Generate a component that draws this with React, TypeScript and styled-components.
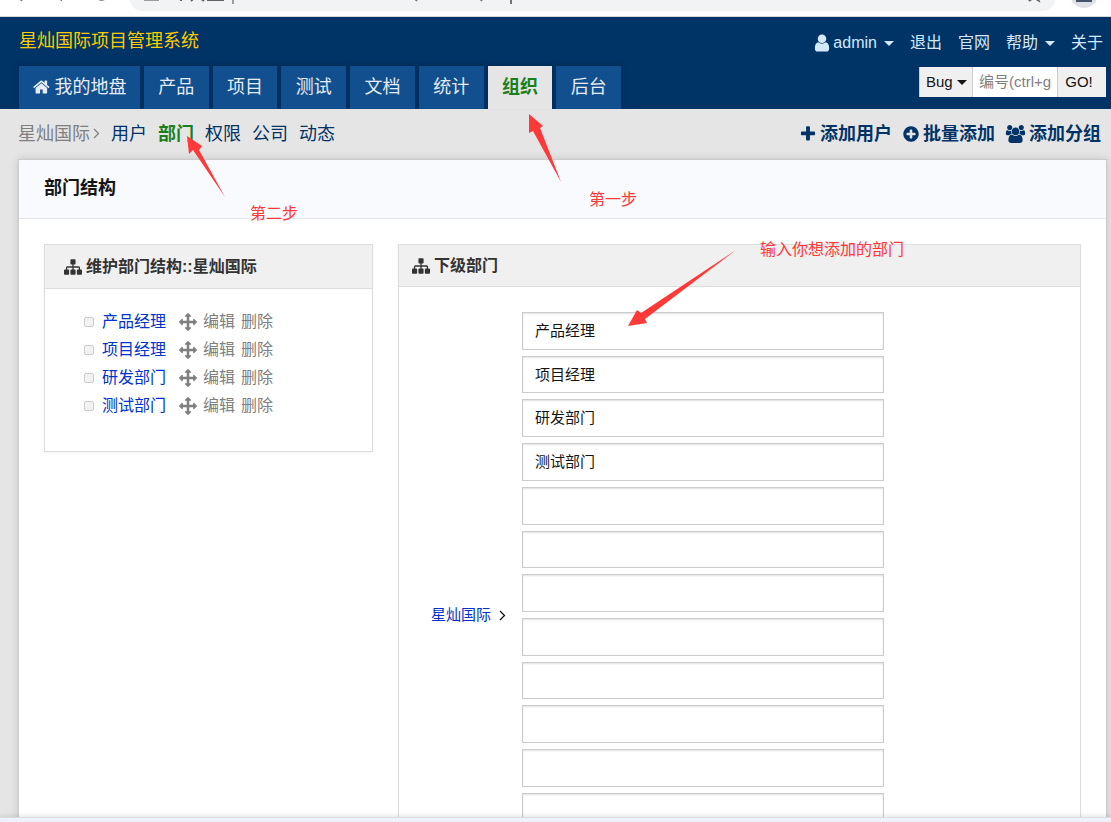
import React from "react";
import styled, { createGlobalStyle, css } from "styled-components";

const GlobalStyle = createGlobalStyle`
  *, *::before, *::after { box-sizing: border-box; }
  body {
    margin: 0;
    color: #141414;
    background: #e5e5e5;
    font-family: "Liberation Sans", "Noto Sans CJK SC", sans-serif;
    font-size: 16px;
    line-height: 24px;
  }
  a { text-decoration: none; color: inherit; }
  ul { list-style: none; margin: 0; padding: 0; }
  button, input, select { font: inherit; border-radius: 0; }
`;

/* ---------- icons ---------- */

const ICONS = {
  home: {
    x: 0,
    w: 1792,
    d: "M1408 992v480q0 26-19 45t-45 19h-384v-384h-256v384h-384q-26 0-45-19t-19-45v-480q0-1 .5-3t.5-3l575-474 575 474q1 2 1 6zm223-69l-62 74q-8 9-21 11h-3q-13 0-21-7l-692-577-692 577q-12 8-24 7-13-2-21-11l-62-74q-8-10-7-23.500t11-21.500l719-599q32-26 76-26t76 26l244 204v-195q0-14 9-23t23-9h192q14 0 23 9t9 23v408l219 182q10 8 11 21.500t-7 23.500z",
  },
  sitemap: {
    x: 0,
    w: 1792,
    d: "M1792 1248v320q0 40-28 68t-68 28h-320q-40 0-68-28t-28-68v-320q0-40 28-68t68-28h96v-192h-512v192h96q40 0 68 28t28 68v320q0 40-28 68t-68 28h-320q-40 0-68-28t-28-68v-320q0-40 28-68t68-28h96v-192h-512v192h96q40 0 68 28t28 68v320q0 40-28 68t-68 28h-320q-40 0-68-28t-28-68v-320q0-40 28-68t68-28h96v-192q0-52 38-90t90-38h512v-192h-96q-40 0-68-28t-28-68v-320q0-40 28-68t68-28h320q40 0 68 28t28 68v320q0 40-28 68t-68 28h-96v192h512q52 0 90 38t38 90v192h96q40 0 68 28t28 68z",
  },
  move: {
    x: 0,
    w: 1792,
    d: "M1792 896q0 26-19 45l-256 256q-19 19-45 19t-45-19-19-45v-128h-384v384h128q26 0 45 19t19 45-19 45l-256 256q-19 19-45 19t-45-19l-256-256q-19-19-19-45t19-45 45-19h128v-384h-384v128q0 26-19 45t-45 19-45-19l-256-256q-19-19-19-45t19-45l256-256q19-19 45-19t45 19 19 45v128h384v-384h-128q-26 0-45-19t-19-45 19-45l256-256q19-19 45-19t45 19l256 256q19 19 19 45t-19 45-45 19h-128v384h384v-128q0-26 19-45t45-19 45 19l256 256q19 19 19 45z",
  },
  plus: {
    x: 0,
    w: 1792,
    d: "M1600 736v192q0 40-28 68t-68 28h-416v416q0 40-28 68t-68 28h-192q-40 0-68-28t-28-68v-416h-416q-40 0-68-28t-28-68v-192q0-40 28-68t68-28h416v-416q0-40 28-68t68-28h192q40 0 68 28t28 68v416h416q40 0 68 28t28 68z",
  },
  plusCircle: {
    x: 0,
    w: 1792,
    d: "M1344 960v-128q0-26-19-45t-45-19h-256v-256q0-26-19-45t-45-19h-128q-26 0-45 19t-19 45v256h-256q-26 0-45 19t-19 45v128q0 26 19 45t45 19h256v256q0 26 19 45t45 19h128q26 0 45-19t19-45v-256h256q26 0 45-19t19-45zm320-64q0 209-103 385.500t-279.500 279.500-385.500 103-385.500-103-279.500-279.500-103-385.500 103-385.500 279.500-279.500 385.500-103 385.500 103 279.500 279.500 103 385.500z",
  },
  user: {
    x: 192,
    w: 1408,
    d: "M1536 1399q0 109-62.500 187t-150.500 78h-854q-88 0-150.500-78t-62.500-187q0-85 8.500-160.500t31.500-152 58.500-131 94-89 134.500-34.500q131 128 313 128t313-128q76 0 134.500 34.500t94 89 58.500 131 31.500 152 8.500 160.500zm-256-887q0 159-112.500 271.500t-271.500 112.500-271.500-112.500-112.500-271.500 112.500-271.500 271.500-112.500 271.500 112.500 112.500 271.500z",
  },
  group: {
    x: 0,
    w: 2048,
    d: "M657 896q-162 5-265 128h-134q-82 0-138-40.500t-56-118.500q0-353 124-353 6 0 43.500 21t97.500 42.500 119 21.500q67 0 133-23-5 37-5 66 0 139 81 256zm1071 637q0 120-73 189.500t-194 69.500h-874q-121 0-194-69.500t-73-189.500q0-53 3.500-103.500t14-109 26.500-108.500 43-97.500 62-81 85.500-53.500 111.500-20q10 0 43 21.500t73 48 107 48 135 21.500 135-21.500 107-48 73-48 43-21.500q61 0 111.500 20t85.500 53.500 62 81 43 97.500 26.500 108.500 14 109 3.500 103.500zm-1024-1277q0 106-75 181t-181 75-181-75-75-181 75-181 181-75 181 75 75 181zm704 384q0 159-112.500 271.500t-271.500 112.500-271.500-112.500-112.500-271.500 112.500-271.500 271.500-112.500 271.500 112.500 112.500 271.500zm576 225q0 78-56 118.500t-138 40.500h-134q-103-123-265-128 81-117 81-256 0-29-5-66 66 23 133 23 59 0 119-21.500t97.500-42.500 43.500-21q124 0 124 353zm-128-609q0 106-75 181t-181 75-181-75-75-181 75-181 181-75 181 75 75 181z",
  },
};

const Svg = styled.svg`
  display: block;
  flex: none;
  fill: currentColor;
`;

function Icon({ name, size }: { name: keyof typeof ICONS; size: number }) {
  const { x, w, d } = ICONS[name];
  return (
    <Svg height={size} width={Math.round((size * w) / 1792)} viewBox={`${x} 0 ${w} 1792`} aria-hidden="true">
      <path d={d} />
    </Svg>
  );
}

function Angle() {
  return (
    <Svg width={7} height={11} viewBox="0 0 7 11" aria-hidden="true">
      <path d="M1 1l4.500 4.500L1 10" fill="none" stroke="currentColor" strokeWidth="1.300" />
    </Svg>
  );
}

const Caret = styled.i`
  width: 0;
  height: 0;
  border: 5px solid transparent;
  border-top-color: currentColor;
  border-bottom: 0;
`;

/* ---------- window ---------- */

const Window = styled.div`
  display: flex;
  flex-direction: column;
  height: 100vh;
  overflow: hidden;
`;

const BrowserBar = styled.div`
  flex: none;
  display: flex;
  align-items: flex-end;
  height: 17px;
  padding-bottom: 5px;
  background: #fff;
  border-bottom: 1px solid #d5d8dc;
  overflow: hidden;
`;

const BrowserButtons = styled.div`
  width: 129px;
  height: 28px;
  flex: none;
`;

const AddressBar = styled.div`
  flex: 1;
  display: flex;
  justify-content: space-between;
  height: 28px;
  border-radius: 14px;
  background: #f1f3f4;
  overflow: hidden;
`;

const BrowserAvatar = styled.div`
  flex: none;
  width: 55px;
  height: 28px;
`;

const StatusBar = styled.div`
  flex: none;
  position: relative;
  height: 5px;
  background: #eef2fc;
  border-top: 1px solid #dcdcde;
  box-shadow: 0 -1px 5px rgba(0, 0, 0, 0.12);
`;

const Page = styled.div`
  position: relative;
  flex: 1;
  min-height: 0;
  overflow: hidden;
`;

/* ---------- header ---------- */

const Header = styled.header`
  display: flex;
  justify-content: space-between;
  height: 92px;
  padding: 0 5px 0 19px;
  background: #003366;
`;

const HeaderColumn = styled.div<{ $end?: boolean }>`
  display: flex;
  flex-direction: column;
  ${(p) => p.$end && "align-items: flex-end;"}
`;

const Brand = styled.h1`
  height: 49px;
  margin: 0;
  font-size: 18px;
  font-weight: 400;
  line-height: 48px;
  color: #ffcc00;
`;

const MainNav = styled.nav`
  display: flex;
  gap: 4px;
  width: 602px;
`;

const Tab = styled.a<{ $active?: boolean; $first?: boolean }>`
  display: flex;
  align-items: center;
  justify-content: center;
  gap: 4px;
  flex: ${(p) => (p.$first ? "0 0 121px" : "1 1 0")};
  height: 43px;
  padding-bottom: 2px;
  font-size: 18px;
  color: #e6ecf2;
  background: #114f8e;
  box-shadow: 0 -2px 4px rgba(0, 0, 0, 0.15);
  ${(p) =>
    p.$active &&
    css`
      color: #1b7f1b;
      font-weight: 700;
      background: #e5e5e5;
    `}
`;

const UserLinks = styled.nav`
  display: flex;
  gap: 16px;
  height: 50px;
  padding: 14px 3px 0 0;
  color: #d3e9fa;
`;

const UserLink = styled.a<{ $menu?: boolean }>`
  display: flex;
  align-items: center;
  gap: ${(p) => (p.$menu ? "7px" : "0")};
  height: 24px;
`;

const WithIcon = styled.span`
  display: flex;
  align-items: center;
  gap: 3px;
`;

const Search = styled.form`
  display: flex;
  height: 30px;
  font-size: 15px;
  border-left: 1px solid #ccc;
  background: #f0f0f0;
`;

const SearchType = styled.label`
  display: flex;
  align-items: center;
  width: 53px;
  padding: 0 5px 0 6px;
  border-right: 1px solid #ccc;
`;

const SearchSelect = styled.select`
  appearance: none;
  width: 31px;
  flex: none;
  padding: 0;
  border: 0;
  background: none;
  color: #141414;
`;

const SearchInput = styled.input`
  width: 85px;
  padding: 0 6px;
  border: 0;
  border-right: 1px solid #ccc;
  background: #fff;
  &::placeholder { color: #808080; opacity: 1; }
`;

const SearchButton = styled.button`
  width: 48px;
  padding: 0 6px 0 0;
  border: 0;
  background: #f0f0f0;
  color: #141414;
`;

/* ---------- module bar ---------- */

const ModuleBar = styled.div`
  display: flex;
  justify-content: space-between;
  height: 50px;
  padding: 0 10px 1px 18px;
  font-size: 18px;
  color: #003366;
`;

const ModuleNav = styled.nav`
  display: flex;
  align-items: center;
  gap: 11px;
`;

const Crumb = styled.span`
  display: flex;
  align-items: center;
  gap: 3px;
  color: #808080;
`;

const ModuleLink = styled.a<{ $active?: boolean }>`
  ${(p) =>
    p.$active &&
    css`
      color: #1b7f1b;
      font-weight: 700;
    `}
`;

const Actions = styled.div`
  display: flex;
  align-items: center;
  gap: 10px;
  font-weight: 700;
`;

const Action = styled.a`
  display: flex;
  align-items: center;
  gap: 3px;
`;

/* ---------- content ---------- */

const Outer = styled.main`
  margin: 0 4px 0 18px;
  background: #fff;
  border: 1px solid #ccc;
  box-shadow: 0 0 8px rgba(0, 0, 0, 0.15);
`;

const Title = styled.h2`
  height: 59px;
  margin: 0;
  padding: 0 25px;
  font-size: 18px;
  line-height: 56px;
  background: #f8fafe;
  border-bottom: 1px solid #e2e4e7;
`;

const Columns = styled.div`
  display: grid;
  grid-template-columns: 329fr 683fr;
  align-items: start;
  gap: 25px;
  padding: 25px;
`;

const Panel = styled.section`
  border: 1px solid #ddd;
  box-shadow: 0 1px 2px rgba(0, 0, 0, 0.06);
`;

const PanelTitle = styled.h3<{ $wide?: boolean }>`
  display: flex;
  align-items: center;
  gap: 4px;
  height: ${(p) => (p.$wide ? "42px" : "44px")};
  margin: 0;
  padding: 0 ${(p) => (p.$wide ? "13px" : "19px")};
  font-size: 16px;
  color: #333;
  background: #f0f0f0;
  border-bottom: 1px solid #ddd;
`;

const Tree = styled.ul`
  padding: 19px 40px 31px 39px;
`;

const TreeRow = styled.li`
  display: flex;
  align-items: center;
  height: 28px;
`;

const TreeCheck = styled.input`
  appearance: none;
  flex: none;
  width: 10px;
  height: 10px;
  margin: 0 8px 0 0;
  border: 1px solid #ccc;
  border-radius: 2px;
  background: #f2f2f2;
`;

const DeptLink = styled.a`
  color: #0033cc;
`;

const RowTools = styled.span`
  display: flex;
  align-items: center;
  gap: 6px;
  margin-left: 13px;
  color: #808080;
`;

const ChildForm = styled.form`
  display: grid;
  grid-template-columns: 123px minmax(0, 362px);
  padding: 25px 0;
`;

const Parent = styled.div`
  display: flex;
  align-items: center;
  justify-content: flex-end;
  gap: 8px;
  padding-right: 16px;
  font-size: 15px;
`;

const Fields = styled.div`
  display: grid;
  grid-auto-rows: 1fr;
  gap: 6px;
  height: 606px;
`;

const Field = styled.input`
  width: 100%;
  min-height: 0;
  padding: 0 12px;
  font-size: 15px;
  color: #141414;
  background: #fff;
  border: 1px solid #ccc;
  box-shadow: inset 0 1px 2px rgba(0, 0, 0, 0.12);
`;

/* ---------- annotations lying over the page ---------- */

const Note = styled.span<{ $x: number; $y: number }>`
  position: absolute;
  left: ${(p) => p.$x}px;
  top: ${(p) => p.$y}px;
  color: #ff3838;
  white-space: nowrap;
`;

const Arrow = styled.svg<{ $x: number; $y: number }>`
  position: absolute;
  left: ${(p) => p.$x}px;
  top: ${(p) => p.$y}px;
  fill: #ff3838;
  pointer-events: none;
`;

const TABS = ["产品", "项目", "测试", "文档", "统计", "组织", "后台"];
const MODULES = ["用户", "部门", "权限", "公司", "动态"];
const DEPTS = ["产品经理", "项目经理", "研发部门", "测试部门"];
const FIELD_COUNT = 14;

export default function App() {
  return (
    <Window>
      <GlobalStyle />
      <BrowserBar>
        <BrowserButtons>
          <svg width="129" height="28" viewBox="0 -17 129 28" aria-hidden="true">
            <path d="M20 -1l2 2M62 -1l-1 2" stroke="#77797c" strokeWidth="1.500" />
            <path d="M96 -3a7 7 0 0 0 11 0" fill="none" stroke="#5f6368" strokeWidth="2" />
          </svg>
        </BrowserButtons>
        <AddressBar>
          <svg width="400" height="28" viewBox="129 -17 400 28" aria-hidden="true">
            <path d="M144 0h15" stroke="#9a9da1" strokeWidth="2" />
            <path d="M181 -2v3M191 1l3-3M200 -2l4 3M207 0h17" stroke="#5f6368" strokeWidth="2" />
            <path d="M233 -6v10" stroke="#9a9da1" strokeWidth="2" />
            <path d="M416 1l2-4M481 1l2-4M511 -3v7" stroke="#6f7478" strokeWidth="2" />
          </svg>
          <svg width="40" height="28" viewBox="1016 -17 40 28" aria-hidden="true">
            <path d="M1029 1l2-5M1029 1l5-3 5 3-2-5" fill="none" stroke="#5f6368" strokeWidth="1.500" />
          </svg>
        </AddressBar>
        <BrowserAvatar>
          <svg width="55" height="28" viewBox="1056 -17 55 28" aria-hidden="true">
            <circle cx="1084" cy="-6" r="14" fill="#dfe1e6" />
            <path d="M1076 -6h16v8h-16z" fill="#46536b" />
          </svg>
        </BrowserAvatar>
      </BrowserBar>

      <Page>
        <Header>
          <HeaderColumn>
            <Brand>星灿国际项目管理系统</Brand>
            <MainNav>
              <Tab href="#" $first>
                <Icon name="home" size={18} />
                我的地盘
              </Tab>
              {TABS.map((t) => (
                <Tab key={t} href="#" $active={t === "组织"}>
                  {t}
                </Tab>
              ))}
            </MainNav>
          </HeaderColumn>
          <HeaderColumn $end>
            <UserLinks>
              <UserLink href="#" $menu>
                <WithIcon>
                  <Icon name="user" size={20} />
                  admin
                </WithIcon>
                <Caret />
              </UserLink>
              <UserLink href="#">退出</UserLink>
              <UserLink href="#">官网</UserLink>
              <UserLink href="#" $menu>
                帮助
                <Caret />
              </UserLink>
              <UserLink href="#">关于</UserLink>
            </UserLinks>
            <Search>
              <SearchType>
                <SearchSelect aria-label="Bug">
                  <option>Bug</option>
                </SearchSelect>
                <Caret />
              </SearchType>
              <SearchInput type="text" aria-label="编号" placeholder="编号(ctrl+g)" />
              <SearchButton type="button">GO!</SearchButton>
            </Search>
          </HeaderColumn>
        </Header>

        <ModuleBar>
          <ModuleNav>
            <Crumb>
              星灿国际
              <Angle />
            </Crumb>
            {MODULES.map((m) => (
              <ModuleLink key={m} href="#" $active={m === "部门"}>
                {m}
              </ModuleLink>
            ))}
          </ModuleNav>
          <Actions>
            <Action href="#">
              <Icon name="plus" size={18} />
              添加用户
            </Action>
            <Action href="#">
              <Icon name="plusCircle" size={18} />
              批量添加
            </Action>
            <Action href="#">
              <Icon name="group" size={18} />
              添加分组
            </Action>
          </Actions>
        </ModuleBar>

        <Outer>
          <Title>部门结构</Title>
          <Columns>
            <Panel>
              <PanelTitle>
                <Icon name="sitemap" size={18} />
                维护部门结构::星灿国际
              </PanelTitle>
              <Tree>
                {DEPTS.map((d) => (
                  <TreeRow key={d}>
                    <TreeCheck type="checkbox" aria-label={d} />
                    <DeptLink href="#">{d}</DeptLink>
                    <RowTools>
                      <Icon name="move" size={18} />
                      <a href="#">编辑</a>
                      <a href="#">删除</a>
                    </RowTools>
                  </TreeRow>
                ))}
              </Tree>
            </Panel>
            <Panel>
              <PanelTitle $wide>
                <Icon name="sitemap" size={18} />
                下级部门
              </PanelTitle>
              <ChildForm>
                <Parent>
                  <DeptLink href="#">星灿国际</DeptLink>
                  <Angle />
                </Parent>
                <Fields>
                  {Array.from({ length: FIELD_COUNT }, (_, i) => (
                    <Field key={i} type="text" aria-label={`部门 ${i + 1}`} defaultValue={DEPTS[i] ?? ""} />
                  ))}
                </Fields>
              </ChildForm>
            </Panel>
          </Columns>
        </Outer>

        <Arrow $x={187} $y={119} width="40" height="62" viewBox="187 136 40 62" aria-hidden="true">
          <path d="M187 136L202 146L199 150L225 197L193 150L189 154Z" />
        </Arrow>
        <Note $x={250} $y={185}>第二步</Note>
        <Arrow $x={528} $y={96} width="36" height="70" viewBox="528 113 36 70" aria-hidden="true">
          <path d="M529 114L543 126L540 128L561 182L533 131L529 133Z" />
        </Arrow>
        <Note $x={589} $y={171}>第一步</Note>
        <Arrow $x={627} $y={232} width="110" height="78" viewBox="627 249 110 78" aria-hidden="true">
          <path d="M628 326L637 310L641 313L736 250L645 319L647 323Z" />
        </Arrow>
        <Note $x={760} $y={221}>输入你想添加的部门</Note>
      </Page>
      <StatusBar />
    </Window>
  );
}
